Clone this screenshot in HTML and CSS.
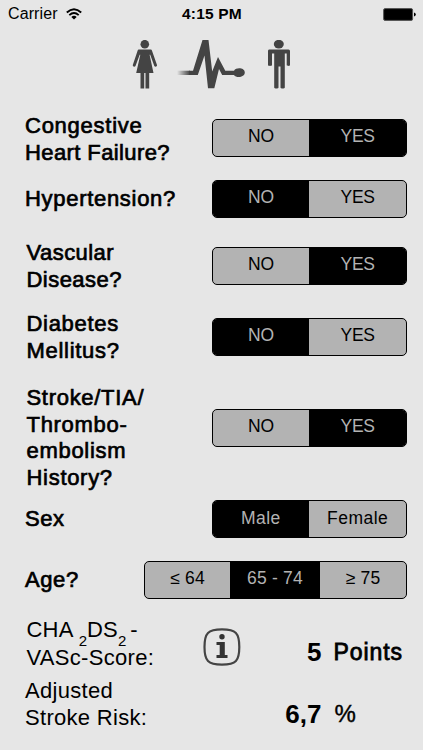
FILE: index.html
```html
<!DOCTYPE html>
<html lang="en">
<head>
<meta charset="utf-8">
<title>CHA2DS2-VASc Score</title>
<link rel="stylesheet" href="styles.css">
</head>
<body>
<header class="status">
  <div class="carrier"><span>Carrier</span>
    <svg width="16" height="12" viewBox="0 0 16 12" fill="none" stroke="#000" stroke-width="1.900"><path d="M.8 4.500Q8-2 15.200 4.500M3.300 7.100Q8 3 12.700 7.100"/><path d="M5.300 8.900Q8 6.800 10.700 8.900L8 11.600z" fill="#000" stroke="none"/></svg>
  </div>
  <div class="time">4:15 PM</div>
  <div class="battery"><svg width="33" height="13" viewBox="0 0 33 13"><rect x=".6" y=".6" width="29" height="11.800" rx="1.500" fill="#000" stroke="#555" stroke-width="1"/><path d="M31 4.500q1.800.3 1.800 2T31 8.500z"/></svg></div>
</header>
<div class="logos">
  <svg class="woman" width="26" height="50" viewBox="0 0 26 50" fill="#444"><circle cx="12.800" cy="4.200" r="4.300"/><path d="M7.300 9.600h11c1 0 1.500.5 1.800 1.300L25 25.100c.3 1.500-2 2.200-2.700.8L18.200 14.700h-.6L21.500 33h-4.300v15.500h-3.700V33h-1.300v15.500H8.500V33H4.200L8.300 14.700h-.6L3.500 25.900C2.800 27.300.5 26.600.8 25.100L5.500 10.900C5.800 10.100 6.300 9.600 7.300 9.600z"/></svg>
  <svg class="pulse" width="68" height="50" viewBox="0 0 68 50"><defs><linearGradient id="fade" x1="0" x2="1"><stop offset="0" stop-color="#444" stop-opacity="0"/><stop offset="1" stop-color="#444"/></linearGradient></defs><path fill="url(#fade)" d="M-1 30.700h13V35H-1z"/><path fill="#444" d="M11 30.700h4L24.500 0H30.500l3.700 31.500L40 17l7.300 13.700H56c2.200-3.600 10.800-3.100 10.800 1.900s-8.600 5.900-10.800 2.400H44.200l-3.200-6L36.300 48.300h-6.300L26.500 15.500 19.800 35H11z"/></svg>
  <svg class="man" width="24" height="50" viewBox="0 0 24 50" fill="#444"><ellipse cx="11.800" cy="4.100" rx="5" ry="4.300"/><path d="M2 9.600h19.500q1.500 0 1.500 1.500V25c0 1.200-3.300 1.200-3.300 0V13.500h-1.900v34c0 1.300-4.300 1.300-4.300 0v-21h-2v21c0 1.300-4.300 1.300-4.300 0v-34H5V25c0 1.200-4 1.200-4 0V11.100q0-1.500 1-1.500z"/></svg>
</div>
<main>
  <section class="row two first"><div class="label"><span class="l1">Congestive</span><br><span class="l2">Heart Failure?</span></div><div class="seg"><span>NO</span><span class="on">YES</span></div></section>
  <section class="row hyper"><div class="label">Hypertension?</div><div class="seg"><span class="on">NO</span><span>YES</span></div></section>
  <section class="row two vascular"><div class="label in">Vascular<br>Disease?</div><div class="seg"><span>NO</span><span class="on">YES</span></div></section>
  <section class="row two diabetes"><div class="label in">Diabetes<br>Mellitus?</div><div class="seg"><span class="on">NO</span><span>YES</span></div></section>
  <section class="row stroke"><div class="label in">Stroke/TIA/<br>Thrombo-<br>embolism<br>History?</div><div class="seg"><span>NO</span><span class="on">YES</span></div></section>
  <section class="row sex"><div class="label">Sex</div><div class="seg wide"><span class="on">Male</span><span>Female</span></div></section>
  <section class="row age"><div class="label">Age?</div><div class="seg three"><span>≤ 64</span><span class="on">65 - 74</span><span>≥ 75</span></div></section>
  <section class="result score"><div class="name in">CHA <sub>2</sub>DS<sub>2</sub><span class="dash">-</span><br><span class="vasc">VASc-Score:</span></div>
    <svg class="info" width="38" height="38" viewBox="0 0 38 38"><path d="M19 1.400C33 1.400 36.300 5 36.300 19S33 36.600 19 36.600 1.500 33 1.500 19 5 1.400 19 1.400z" fill="none" stroke="#444" stroke-width="2.200"/><circle cx="19" cy="8.700" r="2.700" fill="#333"/><path d="M13.500 14h8.300v13h2.700v3H13.500v-3h3.200V17h-3.200z" fill="#333"/></svg>
    <div class="value">5</div><div class="unit">Points</div></section>
  <section class="result risk"><div class="name">Adjusted<br>Stroke Risk:</div><div class="value">6,7</div><div class="unit percent">%</div></section>
</main>
</body>
</html>
```
FILE: styles.css
```css
* { box-sizing: border-box; }
body { margin: 0; width: 423px; height: 750px; overflow: hidden; background: #e6e6e6; color: #000; font-family: "Liberation Sans", sans-serif; }
svg { display: block; flex: none; }
.status { display: grid; grid-template-columns: 1fr 70px 1fr; height: 28px; align-items: center; font-size: 16px; }
.carrier { display: flex; align-items: center; gap: 8px; padding-left: 8px; letter-spacing: .1px; }
.time { font-weight: bold; text-align: center; white-space: nowrap; font-size: 15.500px; letter-spacing: .2px; padding-left: 1px; }
.battery { display: flex; justify-content: flex-end; padding-right: 7px; }
.logos { display: flex; padding: 12px 0 0 132px; height: 84px; }
.pulse { margin-left: 20px; overflow: visible; }
.man { margin-left: 21px; }
.row { display: flex; justify-content: space-between; align-items: center; height: 38px; padding: 0 16px 0 25px; }
.two { height: 53px; }
.label { font-size: 22px; line-height: 26.600px; letter-spacing: .6px; -webkit-text-stroke: .7px #000; white-space: nowrap; padding-top: 1px; }
.label.in { padding-left: 1.500px; }
.l1 { letter-spacing: .75px; }
.l2 { letter-spacing: .4px; }
.first .label { padding-top: 3px; }
.first .seg { margin-bottom: 1px; }
.hyper { margin-top: 15px; }
.hyper .label { padding-top: 0; letter-spacing: .7px; }
.vascular { margin-top: 21px; }
.vascular .label { letter-spacing: .45px; padding-top: 3px; }
.diabetes { margin-top: 18px; }
.diabetes .label { letter-spacing: .7px; padding-top: 3px; }
.stroke { margin-top: 21px; height: 107px; align-items: flex-start; }
.stroke .label { padding-top: 1px; letter-spacing: .7px; }
.stroke .seg { margin-top: 25px; }
.sex { margin-top: 9px; }
.age { margin-top: 23px; }
.seg { display: grid; grid-template-columns: 1fr 1fr; width: 195.500px; height: 38px; border: 1.500px solid #000; border-radius: 5px; overflow: hidden; background: #b3b3b3; font-size: 17.500px; line-height: 33px; text-align: center; letter-spacing: -.2px; }
.wide { letter-spacing: .45px; line-height: 34px; }
.three { width: 263px; grid-template-columns: 85px 90px 1fr; letter-spacing: .2px; }
.on { background: #000; color: #b3b3b3; }
.result { display: flex; padding-left: 25px; height: 56px; }
.name { width: 178px; font-size: 22px; line-height: 27px; letter-spacing: .3px; white-space: nowrap; }
.name.in { padding-left: 1.500px; letter-spacing: .2px; }
.vasc { letter-spacing: .3px; }
.score { margin-top: 17px; }
.score .name { line-height: 28px; }
sub { font-size: 15px; line-height: 0; vertical-align: -9px; letter-spacing: 0; }
.dash { margin-left: 4px; }
.info { margin-top: 12px; }
.value { width: 80.500px; text-align: right; font-size: 26px; font-weight: bold; line-height: 30px; margin-top: 21px; }
.unit { margin: 21px 0 0 12px; font-size: 23px; line-height: 30px; letter-spacing: .9px; -webkit-text-stroke: .8px #000; }
.percent { font-size: 24px; -webkit-text-stroke-width: .4px; margin-left: 13px; }
.risk { margin-top: 6px; }
.risk .name { line-height: 26.500px; }
.risk .value { width: 118.500px; }
```
